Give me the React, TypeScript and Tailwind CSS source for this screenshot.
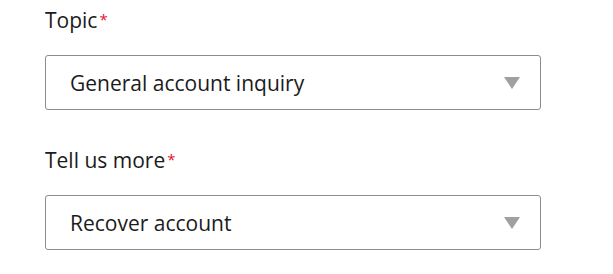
import React from "react";

function Field({ label, value }: { label: string; value: string }) {
  return (
    <div className="flex flex-col">
      <div className="text-[21px] leading-[28px] text-[#1b1b1b]">
        {label}
        <span className="text-[#e4112f] text-[15px] align-top relative top-[-1px] ml-[2px]">*</span>
      </div>
      <div className="mt-[21px] h-[55px] w-[496px] border border-[#8c8c8c] rounded-[3px] bg-white flex items-center justify-between pl-[24px] pr-[20px]">
        <span className="text-[21px] leading-[28px] text-[#1b1b1b]">{value}</span>
        <svg width="16" height="12" viewBox="0 0 16 12" className="shrink-0">
          <polygon points="0,0 16,0 8,12" fill="#a0a0a0" />
        </svg>
      </div>
    </div>
  );
}

export default function App() {
  return (
    <div
      className="w-[613px] h-[274px] bg-white pl-[45px] pt-[6px] flex flex-col gap-[36px]"
      style={{ fontFamily: "'Open Sans', sans-serif" }}
    >
      <Field label="Topic" value="General account inquiry" />
      <Field label="Tell us more" value="Recover account" />
    </div>
  );
}
